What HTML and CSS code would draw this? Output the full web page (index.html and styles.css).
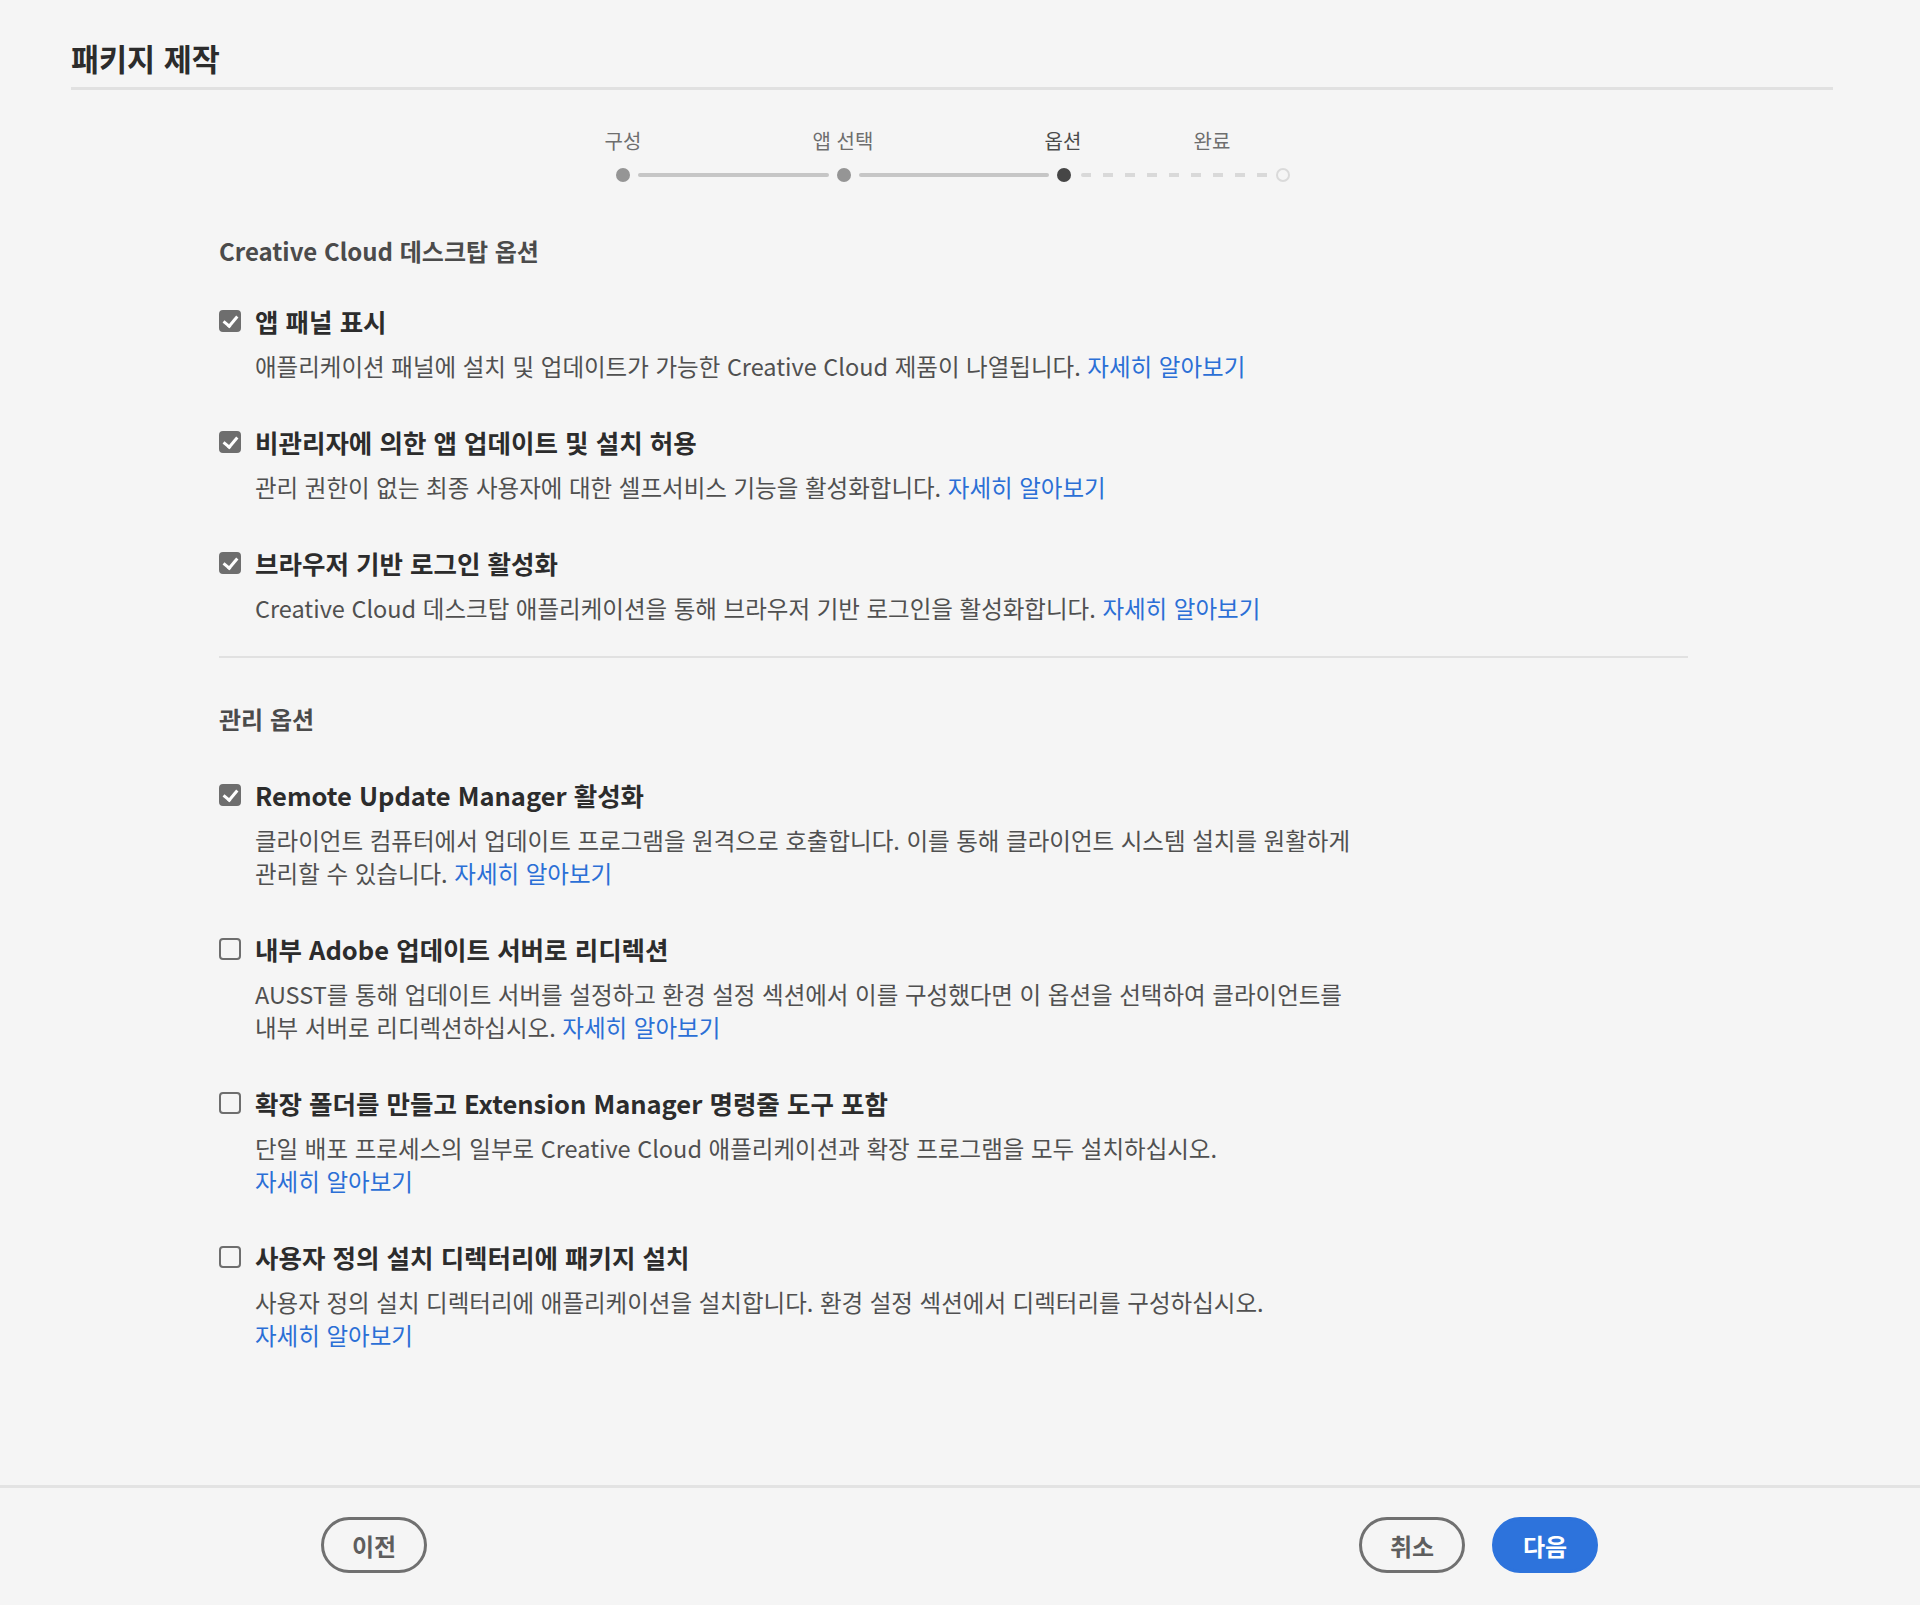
FILE: index.html
```html
<!DOCTYPE html>
<html lang="ko">
<head>
    <meta charset="UTF-8">
    <meta name="viewport" content="width=device-width, initial-scale=1.0">
    <title>패키지 제작</title>
    <link rel="stylesheet" href="styles.css">
</head>
<body>
    <div class="page">
        <header class="page-header">
            <h1>패키지 제작</h1>
        </header>

        <div class="stepper">
            <div class="step-labels">
                <span class="step-label">구성</span>
                <span class="step-label">앱 선택</span>
                <span class="step-label current">옵션</span>
                <span class="step-label last">완료</span>
            </div>
            <div class="step-track">
                <span class="dot done"></span>
                <span class="track-line"></span>
                <span class="dot done"></span>
                <span class="track-line"></span>
                <span class="dot current"></span>
                <span class="track-line dashed"></span>
                <span class="dot todo"></span>
            </div>
        </div>

        <main class="content">
            <section class="options-section">
                <h2 class="section-title">Creative Cloud 데스크탑 옵션</h2>

                <div class="option">
                    <label class="option-title"><span class="checkbox checked"></span>앱 패널 표시</label>
                    <p class="option-desc">애플리케이션 패널에 설치 및 업데이트가 가능한 Creative Cloud 제품이 나열됩니다. <a href="#">자세히 알아보기</a></p>
                </div>

                <div class="option">
                    <label class="option-title"><span class="checkbox checked"></span>비관리자에 의한 앱 업데이트 및 설치 허용</label>
                    <p class="option-desc">관리 권한이 없는 최종 사용자에 대한 셀프서비스 기능을 활성화합니다. <a href="#">자세히 알아보기</a></p>
                </div>

                <div class="option">
                    <label class="option-title"><span class="checkbox checked"></span>브라우저 기반 로그인 활성화</label>
                    <p class="option-desc">Creative Cloud 데스크탑 애플리케이션을 통해 브라우저 기반 로그인을 활성화합니다. <a href="#">자세히 알아보기</a></p>
                </div>
            </section>

            <section class="options-section admin">
                <h2 class="section-title">관리 옵션</h2>

                <div class="option">
                    <label class="option-title"><span class="checkbox checked"></span>Remote Update Manager 활성화</label>
                    <p class="option-desc">클라이언트 컴퓨터에서 업데이트 프로그램을 원격으로 호출합니다. 이를 통해 클라이언트 시스템 설치를 원활하게<br>관리할 수 있습니다. <a href="#">자세히 알아보기</a></p>
                </div>

                <div class="option">
                    <label class="option-title"><span class="checkbox"></span>내부 Adobe 업데이트 서버로 리디렉션</label>
                    <p class="option-desc">AUSST를 통해 업데이트 서버를 설정하고 환경 설정 섹션에서 이를 구성했다면 이 옵션을 선택하여 클라이언트를<br>내부 서버로 리디렉션하십시오. <a href="#">자세히 알아보기</a></p>
                </div>

                <div class="option">
                    <label class="option-title"><span class="checkbox"></span>확장 폴더를 만들고 Extension Manager 명령줄 도구 포함</label>
                    <p class="option-desc">단일 배포 프로세스의 일부로 Creative Cloud 애플리케이션과 확장 프로그램을 모두 설치하십시오.<br><a href="#">자세히 알아보기</a></p>
                </div>

                <div class="option">
                    <label class="option-title"><span class="checkbox"></span>사용자 정의 설치 디렉터리에 패키지 설치</label>
                    <p class="option-desc">사용자 정의 설치 디렉터리에 애플리케이션을 설치합니다. 환경 설정 섹션에서 디렉터리를 구성하십시오.<br><a href="#">자세히 알아보기</a></p>
                </div>
            </section>
        </main>

        <footer class="page-footer">
            <button type="button" class="btn">이전</button>
            <div class="footer-right">
                <button type="button" class="btn">취소</button>
                <button type="button" class="btn primary">다음</button>
            </div>
        </footer>
    </div>
</body>
</html>
```

FILE: styles.css
```css
* {
    box-sizing: border-box;
}
body {
    margin: 0;
    background-color: #f5f5f5;
    font-family: "Noto Sans CJK KR", "Noto Sans", sans-serif;
    color: #2c2c2c;
}
.page {
    min-height: 100vh;
    display: flex;
    flex-direction: column;
}
.page-header {
    margin: 0 87px 0 71px;
    padding-top: 38px;
    border-bottom: 3px solid #e1e1e1;
}
.page-header h1 {
    margin: 0 0 9px;
    font-size: 30.5px;
    line-height: 40px;
    font-weight: 700;
    color: #2c2c2c;
}

/* stepper */
.stepper {
    margin: 39px 0 0 513px;
    width: 880px;
}
.step-labels {
    display: grid;
    grid-template-columns: repeat(4, 220px);
    height: 24px;
}
.step-label {
    text-align: center;
    font-size: 20px;
    line-height: 24px;
    color: #6e6e6e;
}
.step-label.current {
    color: #4b4b4b;
}
.step-label.last {
    margin-right: 142px;
}
.step-track {
    display: flex;
    align-items: center;
    margin: 15px 0 0 103px;
    width: 674px;
}
.dot {
    width: 14px;
    height: 14px;
    border-radius: 50%;
    flex: none;
}
.dot.done {
    background-color: #959595;
}
.dot.current {
    background-color: #464646;
}
.dot.todo {
    border: 2px solid #dadada;
}
.track-line {
    flex: 1;
    height: 4px;
    margin: 0 8px;
    border-radius: 2px;
    background-color: #c6c6c6;
}
.track-line.dashed {
    margin: 0 4px 0 10px;
    background: repeating-linear-gradient(90deg, #d9d9d9 0 10px, transparent 10px 22px);
}

/* options */
.content {
    margin: 0 232px 0 219px;
}
.options-section {
    padding-top: 54px;
    padding-bottom: 31px;
}
.options-section.admin {
    padding-top: 46px;
    border-top: 2px solid #e1e1e1;
}
.section-title {
    margin: 0 0 39px;
    font-size: 24px;
    line-height: 30px;
    font-weight: 700;
    color: #4b4b4b;
}
.options-section.admin .section-title {
    margin-bottom: 45px;
}
.option {
    margin-bottom: 43px;
}
.option:last-child {
    margin-bottom: 0;
}
.option-title {
    display: flex;
    align-items: center;
    font-size: 25.5px;
    line-height: 32px;
    font-weight: 700;
    color: #2c2c2c;
}
.checkbox {
    width: 22px;
    height: 22px;
    margin-right: 14px;
    border: 2px solid #6e6e6e;
    border-radius: 4px;
    flex: none;
    position: relative;
}
.checkbox.checked {
    background-color: #6e6e6e;
}
.checkbox.checked::after {
    content: "";
    position: absolute;
    left: 5px;
    top: 1px;
    width: 6px;
    height: 11px;
    border: solid #fff;
    border-width: 0 3px 3px 0;
    transform: rotate(40deg);
}
.option-desc {
    margin: 13px 0 0 36px;
    max-width: 1200px;
    font-size: 23.5px;
    line-height: 33px;
    color: #505050;
}
.option-desc a {
    color: #2b6fd6;
    text-decoration: none;
}

/* footer */
.page-footer {
    margin-top: auto;
    border-top: 3px solid #e3e3e3;
    padding: 29px 322px 32px 321px;
    display: flex;
    justify-content: space-between;
    align-items: center;
}
.footer-right {
    display: flex;
    gap: 27px;
}
.btn {
    width: 106px;
    height: 56px;
    border: 3px solid #707070;
    border-radius: 28px;
    background-color: transparent;
    font-family: inherit;
    font-size: 24px;
    font-weight: 700;
    color: #5e5e5e;
    cursor: pointer;
}
.btn.primary {
    border-color: #2d73dc;
    background-color: #2d73dc;
    color: #fff;
}
```
